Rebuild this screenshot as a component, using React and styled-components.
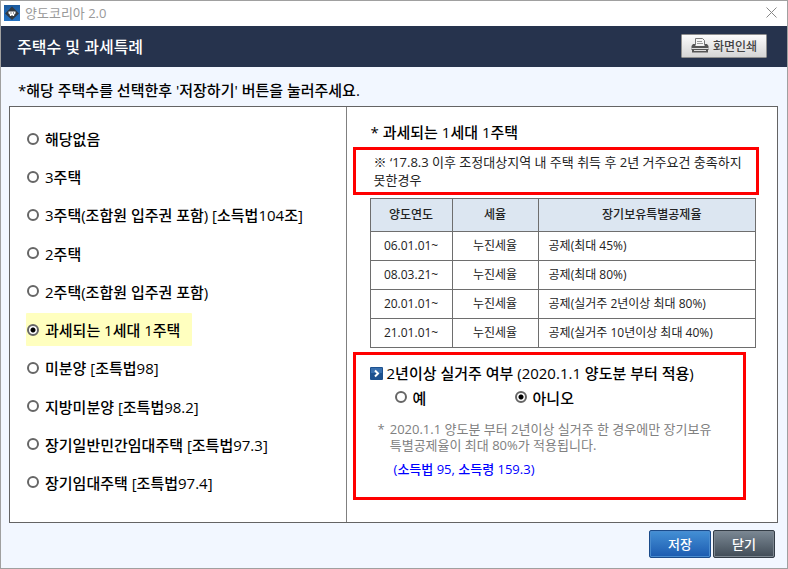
import React, { useState } from 'react';
import styled, { createGlobalStyle } from 'styled-components';

const GlobalStyle = createGlobalStyle`
  * {
    box-sizing: border-box;
  }

  body {
    margin: 0;
    color: #000;
    background-color: #f2f7ff;
    font-family: "Open Sans", "Noto Sans CJK KR", sans-serif;
    font-size: 15px;
    word-break: keep-all;
  }

  button, input {
    font-family: inherit;
  }
`;

const Window = styled.div`
  display: flex;
  flex-direction: column;
  min-height: 100vh;
  border: 1px solid #a0a0a0;
  background-color: #f2f7ff;
`;

const TitleBar = styled.div`
  display: flex;
  align-items: center;
  gap: 5px;
  height: 25px;
  padding: 0 10px 2px 3px;
  color: #999;
  background-color: #fff;
  font-size: 13px;
`;

const CloseButton = styled.button`
  display: flex;
  margin-left: auto;
  padding: 0;
  border: 0;
  background: none;
`;

const Header = styled.header`
  display: flex;
  align-items: center;
  justify-content: space-between;
  height: 41px;
  padding: 0 20px 2px 16px;
  color: #fff;
  background-color: #26334d;
`;

const HeaderTitle = styled.h1`
  margin: 0;
  font-size: 16px;
  font-weight: 500;
`;

const PrintButton = styled.button`
  display: flex;
  align-items: center;
  justify-content: center;
  gap: 4px;
  width: 86px;
  height: 24px;
  padding: 0;
  border: 1px solid #8f8f8f;
  border-radius: 1px;
  color: #444;
  background: linear-gradient(#fcfcfc, #d5d5d5);
  font-size: 12px;
  font-weight: 500;
`;

const Main = styled.main`
  display: flex;
  flex: 1;
  flex-direction: column;
  padding: 0 9px 0 8px;
`;

const Guide = styled.p`
  margin: 0;
  padding: 11px 9px 4px;
  font-size: 15px;
  font-weight: 500;
  line-height: 24px;
`;

const Panel = styled.div`
  display: grid;
  flex: 1;
  grid-template-columns: 337fr 431fr;
  border: 1px solid #646464;
  background-color: #fff;
`;

const HouseList = styled.div`
  display: flex;
  flex-direction: column;
  align-items: flex-start;
  justify-content: space-between;
  padding: 15px 0 23px 16px;
  border-right: 1px solid #808080;
`;

const Option = styled.label`
  display: flex;
  align-items: center;
  gap: 6px;
  height: ${props => props.$compact ? '24px' : '33px'};
  padding: ${props => props.$compact ? '0' : '0 12px 0 1px'};
  border-radius: 1px;
  background-color: ${props => props.$highlight ? '#ffffbf' : 'transparent'};
  font-weight: 500;
`;

const RadioInput = styled.input`
  appearance: none;
  flex: none;
  width: 12px;
  height: 12px;
  margin: 0;
  border: 2px solid #666;
  border-radius: 50%;
  background-color: #fff;

  &:checked {
    background-image: radial-gradient(circle, #000 2px, #fff 3px);
  }
`;

const Detail = styled.section`
  padding: 14px 0 16px 6px;
`;

const DetailTitle = styled.h2`
  margin: 0 0 4px;
  padding-left: 18px;
  font-size: 15px;
  font-weight: 500;
  line-height: 22px;
`;

const ConditionBox = styled.div`
  margin-right: 18px;
  padding: 3px 0 3px 18px;
  border: 3px solid #f00;
  color: #222;
  font-size: 13px;
  line-height: 18px;
`;

const RateTable = styled.table`
  width: calc(100% - 38px);
  margin: 3px 21px 4px 17px;
  border-collapse: collapse;
  table-layout: fixed;
  font-size: 12px;
  line-height: 18px;
`;

const HeadCell = styled.th`
  width: ${props => props.$width || 'auto'};
  height: 33px;
  padding: ${props => props.$left ? '0 0 0 10px' : '0'};
  border: 1px solid #6e6e6e;
  background-color: #dce6f1;
  color: #222;
  font-weight: 500;
`;

const Cell = styled.td`
  height: 29px;
  padding: ${props => props.$left ? '0 0 0 10px' : '0'};
  border: 1px solid #6e6e6e;
  color: #222;
  text-align: ${props => props.$left ? 'left' : 'center'};
`;

const ResidenceBox = styled.fieldset`
  min-width: 0;
  margin: 0 31px 0 0;
  padding: 6px 13px 18px 14px;
  border: 3px solid #f00;
`;

const ResidenceTitle = styled.div`
  display: flex;
  align-items: center;
  gap: 4px;
  font-weight: 500;
  line-height: 24px;
`;

const AnswerRow = styled.div`
  display: grid;
  grid-template-columns: 120px 1fr;
  padding-left: 25px;
`;

const Note = styled.p`
  display: flex;
  gap: 5px;
  margin: 12px 0 6px 8px;
  color: #808080;
  font-size: 13px;
  line-height: 16px;
`;

const LawReference = styled.div`
  padding-left: 24px;
  color: #00f;
  font-size: 13px;
  font-weight: 500;
  line-height: 20px;
`;

const Footer = styled.footer`
  display: flex;
  justify-content: flex-end;
  gap: 2px;
  padding: 7px 12px 10px;
`;

const FooterButton = styled.button`
  width: 62px;
  height: 28px;
  padding: 0 0 2px;
  border: 1px solid ${props => props.$primary ? '#1b4b8a' : '#333c46'};
  border-radius: 2px;
  color: #fff;
  background: ${props => props.$primary
    ? 'linear-gradient(#4490d5, #1c5bb0)'
    : 'linear-gradient(#7b8894, #414c57)'};
  box-shadow: inset 0 0 0 1px ${props => props.$primary ? '#4a8ccf' : '#7d8791'};
  font-size: 13px;
  font-weight: 500;
`;

const houseOptions = [
  '해당없음',
  '3주택',
  '3주택(조합원 입주권 포함) [소득법104조]',
  '2주택',
  '2주택(조합원 입주권 포함)',
  '과세되는 1세대 1주택',
  '미분양 [조특법98]',
  '지방미분양 [조특법98.2]',
  '장기일반민간임대주택 [조특법97.3]',
  '장기임대주택 [조특법97.4]',
];

const rates = [
  ['06.01.01~', '누진세율', '공제(최대 45%)'],
  ['08.03.21~', '누진세율', '공제(최대 80%)'],
  ['20.01.01~', '누진세율', '공제(실거주 2년이상 최대 80%)'],
  ['21.01.01~', '누진세율', '공제(실거주 10년이상 최대 40%)'],
];

const AppIcon = () => (
  <svg width="16" height="16" viewBox="0 0 16 16" aria-hidden="true">
    <defs>
      <linearGradient id="appBlue" x2="0" y2="1">
        <stop stopColor="#1c5a9e" />
        <stop offset="1" stopColor="#2573c4" />
      </linearGradient>
    </defs>
    <path fill="url(#appBlue)" d="M0 0h16v16H0z" />
    <path fill="#333940" d="M8 1.5 15 8.5 8 15 1 8.5z" />
    <path fill="#fff" d="M4.5 6.5h7v2l-1 .5-.5 2H9l-1-1-1 1H6L5.500 9l-1-.5z" />
    <path fill="#333940" d="M6.500 7.500h1v1h-1zM9 7.500h1v1H9z" />
  </svg>
);

const CloseIcon = () => (
  <svg width="11" height="11" viewBox="0 0 11 11" aria-hidden="true">
    <path d="M.5.5l10 10M10.500.5l-10 10" stroke="#888" fill="none" />
  </svg>
);

const PrinterIcon = () => (
  <svg width="18" height="15" viewBox="0 0 18 15" aria-hidden="true">
    <path d="M4.500 7.500v-7h7l2 2v5" fill="#f6f6f6" stroke="#777" />
    <path d="M6 3.500h5M6 5.500h6" stroke="#999" />
    <path d="M2 6h2v2h10V6h2l1.500 2v4H.5V8z" fill="#555" />
    <path d="M.5 10.500h17" stroke="#ddd" />
    <path d="M1 11h16v3.500H1z" fill="#555" />
    <path d="M3 12.500h12" stroke="#ddd" />
  </svg>
);

const ArrowIcon = () => (
  <svg width="13" height="13" viewBox="0 0 13 13" aria-hidden="true">
    <rect width="13" height="13" rx="1" fill="#1d518f" />
    <path d="M1 1h11v5H1z" fill="#386fae" />
    <path d="M5 3.500l3 3-3 3" stroke="#fff" strokeWidth="2" fill="none" />
  </svg>
);

const Radio = ({ label, ...props }) => (
  <Option $compact={props.name === 'residence'} $highlight={props.checked && props.name === 'house'}>
    <RadioInput type="radio" {...props} />
    {label}
  </Option>
);

const App = () => {
  const [house, setHouse] = useState('과세되는 1세대 1주택');
  const [residence, setResidence] = useState('아니오');

  return (
    <>
      <GlobalStyle />
      <Window>
        <TitleBar>
          <AppIcon />
          양도코리아 2.0
          <CloseButton aria-label="닫기"><CloseIcon /></CloseButton>
        </TitleBar>
        <Header>
          <HeaderTitle>주택수 및 과세특례</HeaderTitle>
          <PrintButton><PrinterIcon />화면인쇄</PrintButton>
        </Header>
        <Main>
          <Guide>*해당 주택수를 선택한후 '저장하기' 버튼을 눌러주세요.</Guide>
          <Panel>
            <HouseList role="radiogroup" aria-label="주택수">
              {houseOptions.map(option => (
                <Radio
                  key={option}
                  name="house"
                  label={option}
                  checked={house === option}
                  onChange={() => setHouse(option)}
                />
              ))}
            </HouseList>
            <Detail>
              <DetailTitle>* 과세되는 1세대 1주택</DetailTitle>
              <ConditionBox>※ ‘17.8.3 이후 조정대상지역 내 주택 취득 후 2년 거주요건 충족하지 못한경우</ConditionBox>
              <RateTable>
                <thead>
                  <tr>
                    <HeadCell $width="82px">양도연도</HeadCell>
                    <HeadCell $width="86px">세율</HeadCell>
                    <HeadCell $left>장기보유특별공제율</HeadCell>
                  </tr>
                </thead>
                <tbody>
                  {rates.map(([date, rate, deduction]) => (
                    <tr key={date}>
                      <Cell>{date}</Cell>
                      <Cell>{rate}</Cell>
                      <Cell $left>{deduction}</Cell>
                    </tr>
                  ))}
                </tbody>
              </RateTable>
              <ResidenceBox aria-labelledby="residence-title">
                <ResidenceTitle id="residence-title">
                  <ArrowIcon />
                  2년이상 실거주 여부 (2020.1.1 양도분 부터 적용)
                </ResidenceTitle>
                <AnswerRow>
                  {['예', '아니오'].map(answer => (
                    <Radio
                      key={answer}
                      name="residence"
                      label={answer}
                      checked={residence === answer}
                      onChange={() => setResidence(answer)}
                    />
                  ))}
                </AnswerRow>
                <Note>
                  <span>*</span>
                  <span>2020.1.1 양도분 부터 2년이상 실거주 한 경우에만 장기보유 특별공제율이 최대 80%가 적용됩니다.</span>
                </Note>
                <LawReference>(소득법 95, 소득령 159.3)</LawReference>
              </ResidenceBox>
            </Detail>
          </Panel>
        </Main>
        <Footer>
          <FooterButton $primary>저장</FooterButton>
          <FooterButton>닫기</FooterButton>
        </Footer>
      </Window>
    </>
  );
};

export default App;
